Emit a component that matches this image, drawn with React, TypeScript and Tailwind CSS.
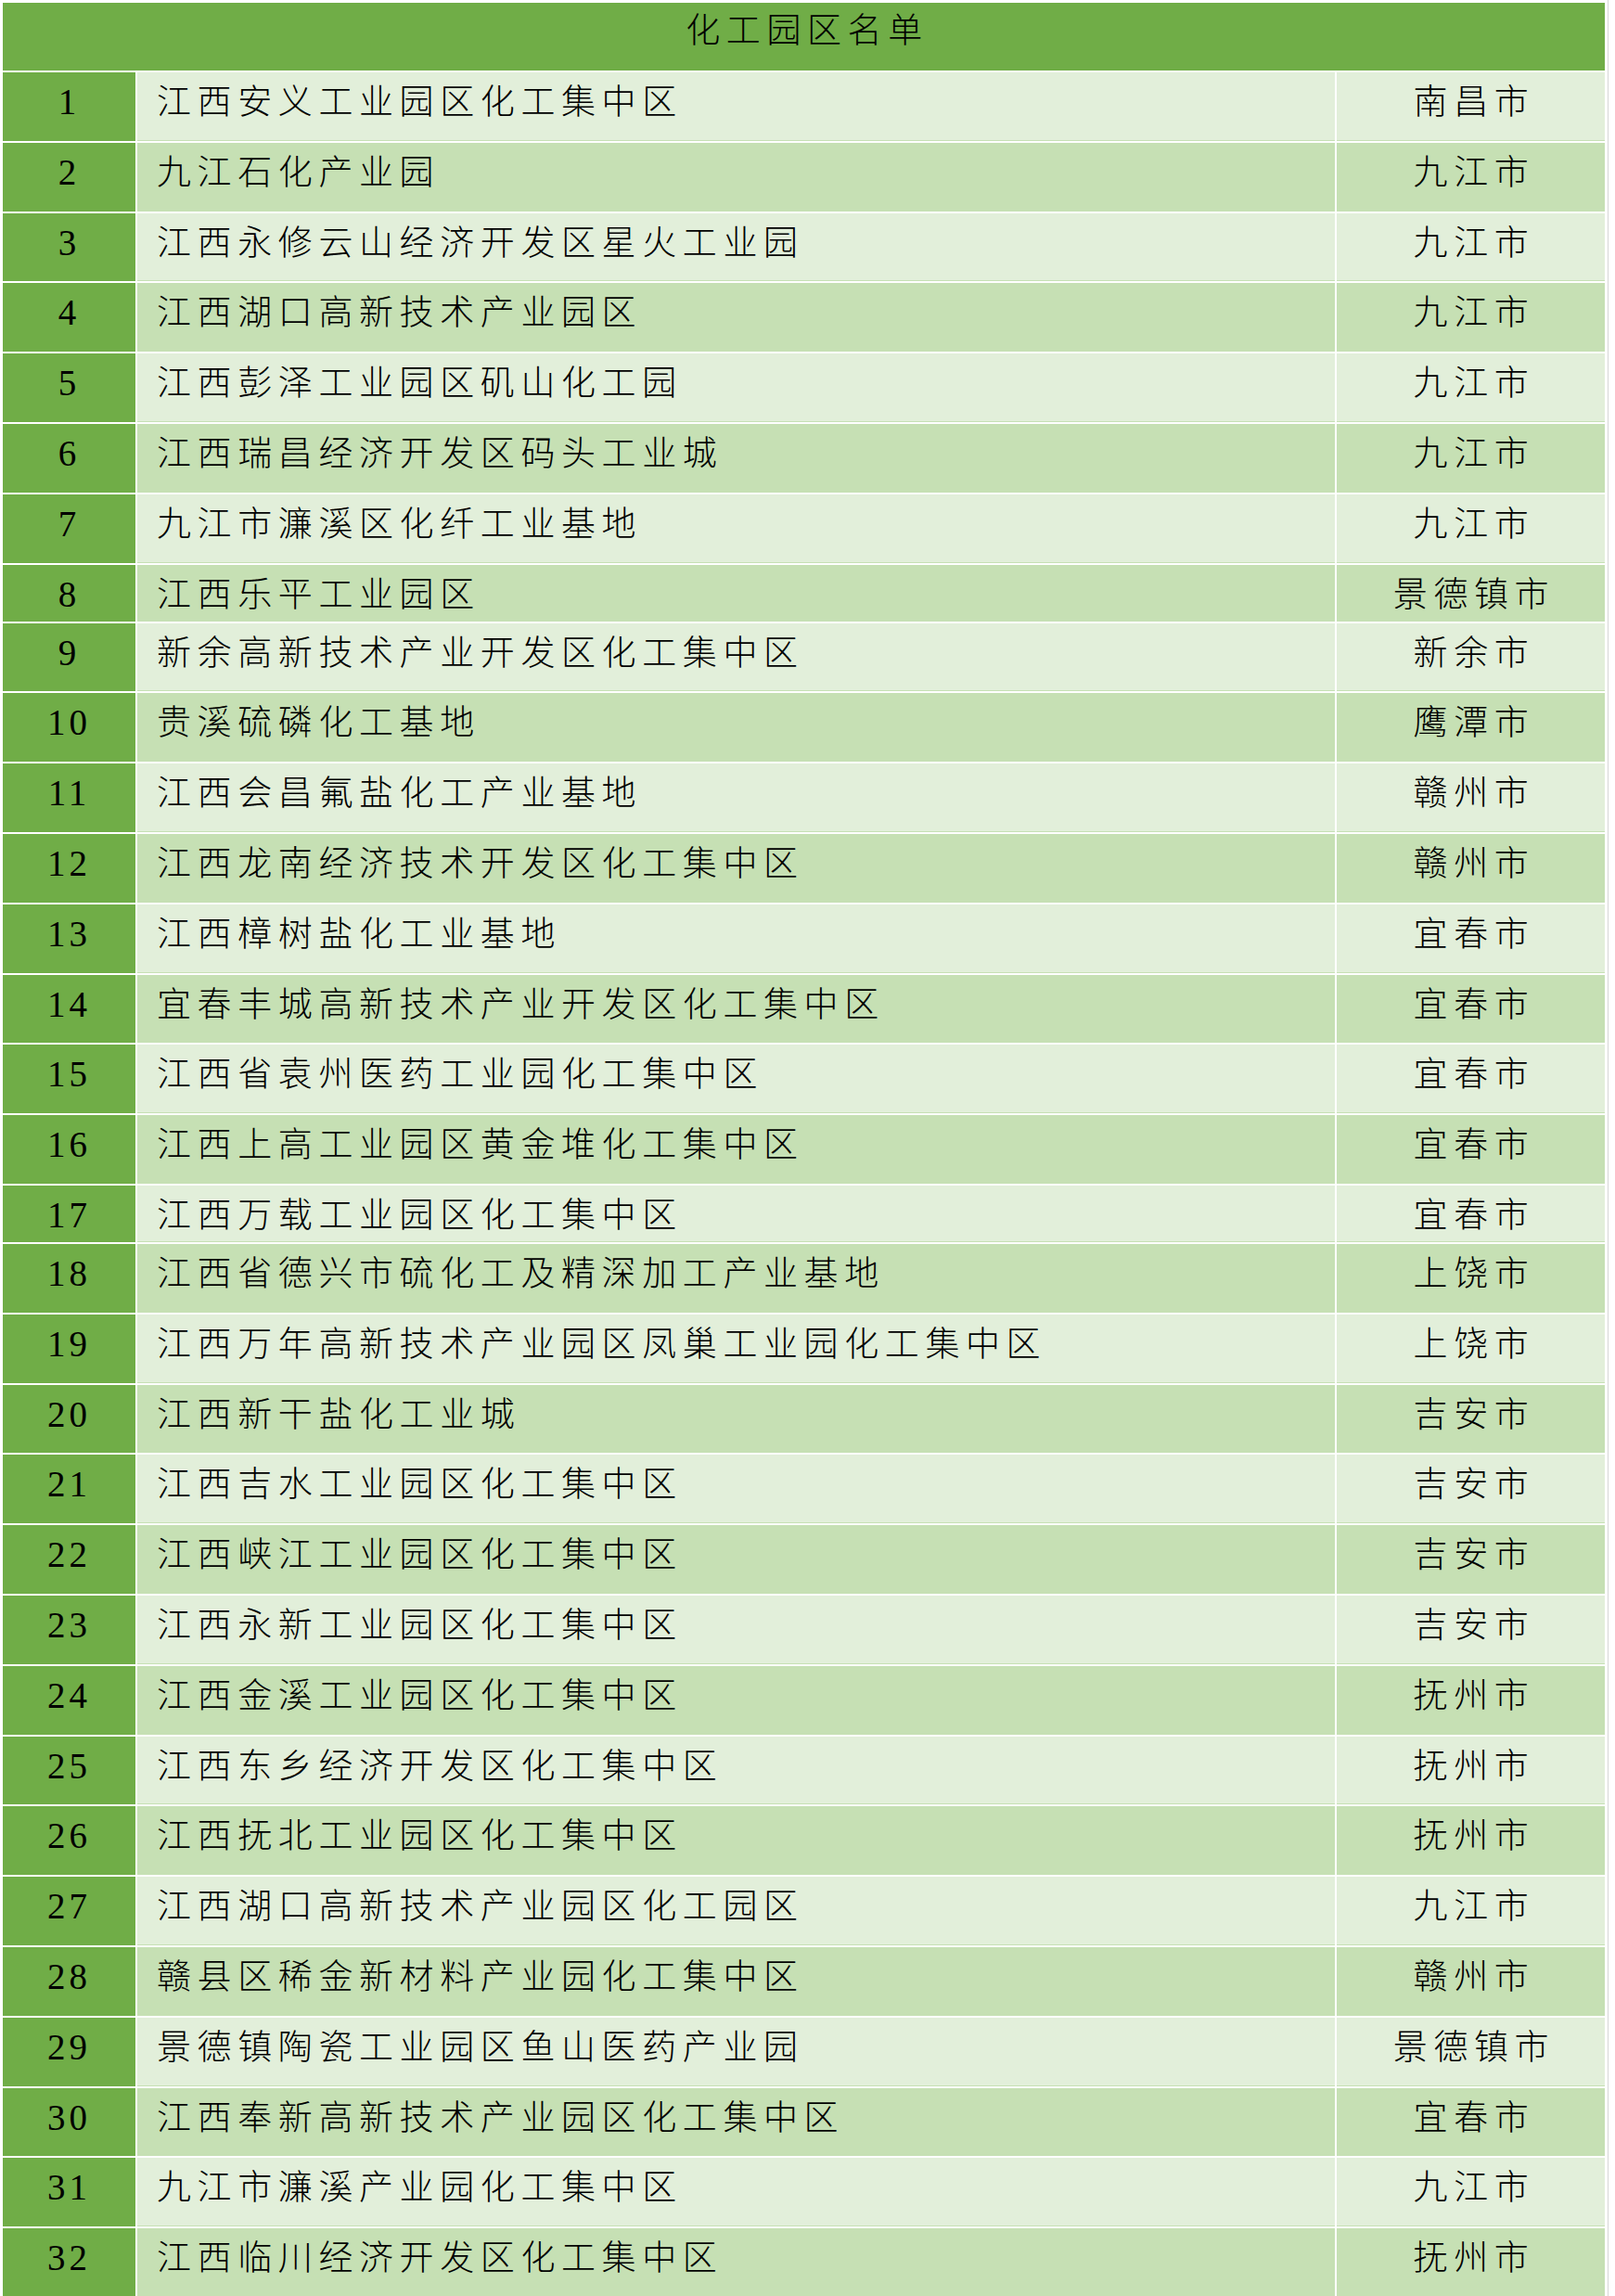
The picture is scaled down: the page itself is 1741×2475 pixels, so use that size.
import React from 'react';

type Park = { no: number; name: string; city: string; short?: boolean };

const PARKS: Park[] = [
  { no: 1, name: '江西安义工业园区化工集中区', city: '南昌市' },
  { no: 2, name: '九江石化产业园', city: '九江市' },
  { no: 3, name: '江西永修云山经济开发区星火工业园', city: '九江市' },
  { no: 4, name: '江西湖口高新技术产业园区', city: '九江市' },
  { no: 5, name: '江西彭泽工业园区矶山化工园', city: '九江市' },
  { no: 6, name: '江西瑞昌经济开发区码头工业城', city: '九江市' },
  { no: 7, name: '九江市濂溪区化纤工业基地', city: '九江市' },
  { no: 8, name: '江西乐平工业园区', city: '景德镇市', short: true },
  { no: 9, name: '新余高新技术产业开发区化工集中区', city: '新余市' },
  { no: 10, name: '贵溪硫磷化工基地', city: '鹰潭市' },
  { no: 11, name: '江西会昌氟盐化工产业基地', city: '赣州市' },
  { no: 12, name: '江西龙南经济技术开发区化工集中区', city: '赣州市' },
  { no: 13, name: '江西樟树盐化工业基地', city: '宜春市' },
  { no: 14, name: '宜春丰城高新技术产业开发区化工集中区', city: '宜春市' },
  { no: 15, name: '江西省袁州医药工业园化工集中区', city: '宜春市' },
  { no: 16, name: '江西上高工业园区黄金堆化工集中区', city: '宜春市' },
  { no: 17, name: '江西万载工业园区化工集中区', city: '宜春市', short: true },
  { no: 18, name: '江西省德兴市硫化工及精深加工产业基地', city: '上饶市' },
  { no: 19, name: '江西万年高新技术产业园区凤巢工业园化工集中区', city: '上饶市' },
  { no: 20, name: '江西新干盐化工业城', city: '吉安市' },
  { no: 21, name: '江西吉水工业园区化工集中区', city: '吉安市' },
  { no: 22, name: '江西峡江工业园区化工集中区', city: '吉安市' },
  { no: 23, name: '江西永新工业园区化工集中区', city: '吉安市' },
  { no: 24, name: '江西金溪工业园区化工集中区', city: '抚州市' },
  { no: 25, name: '江西东乡经济开发区化工集中区', city: '抚州市' },
  { no: 26, name: '江西抚北工业园区化工集中区', city: '抚州市' },
  { no: 27, name: '江西湖口高新技术产业园区化工园区', city: '九江市' },
  { no: 28, name: '赣县区稀金新材料产业园化工集中区', city: '赣州市' },
  { no: 29, name: '景德镇陶瓷工业园区鱼山医药产业园', city: '景德镇市' },
  { no: 30, name: '江西奉新高新技术产业园区化工集中区', city: '宜春市' },
  { no: 31, name: '九江市濂溪产业园化工集中区', city: '九江市' },
  { no: 32, name: '江西临川经济开发区化工集中区', city: '抚州市' },
];

const CJK = 'font-["Noto_Sans_CJK_SC",sans-serif] font-light text-[37px] leading-[44px] tracking-[6.6px] text-black';

function ParkRow({ park }: { park: Park }) {
  const light = park.no % 2 === 1;
  const bg = light ? 'bg-[#e2efda] shadow-[inset_0_-1px_0_#c6e0b4]' : 'bg-[#c6e0b4]';
  return (
    <div
      className={`grid grid-cols-[143px_1291px_289px] gap-x-[2px] ${park.short ? 'h-[61px]' : 'h-[73.8px]'}`}
    >
      <div className="bg-[#70ad47] pt-[10px] text-center font-['Liberation_Serif',serif] text-[39px] leading-[44px] tracking-[4px] text-black">
        {park.no}
      </div>
      <div className={`${bg} ${CJK} pl-[21px] pt-[7px] whitespace-nowrap`}>{park.name}</div>
      <div className={`${bg} ${CJK} pl-[7px] pt-[7px] text-center whitespace-nowrap`}>{park.city}</div>
    </div>
  );
}

export default function App() {
  return (
    <div className="h-[2475px] w-[1741px] overflow-hidden bg-white">
      <div className="w-[1734px] border-r border-[#d6d6d6] pl-[3px] pt-[3px] min-h-[2475px]">
        <div className="flex w-[1727px] flex-col gap-y-[2px]">
          <div className={`h-[73px] bg-[#70ad47] pl-[7px] pt-[5px] text-center ${CJK}`}>化工园区名单</div>
          {PARKS.map((p) => (
            <ParkRow key={p.no} park={p} />
          ))}
        </div>
      </div>
    </div>
  );
}
